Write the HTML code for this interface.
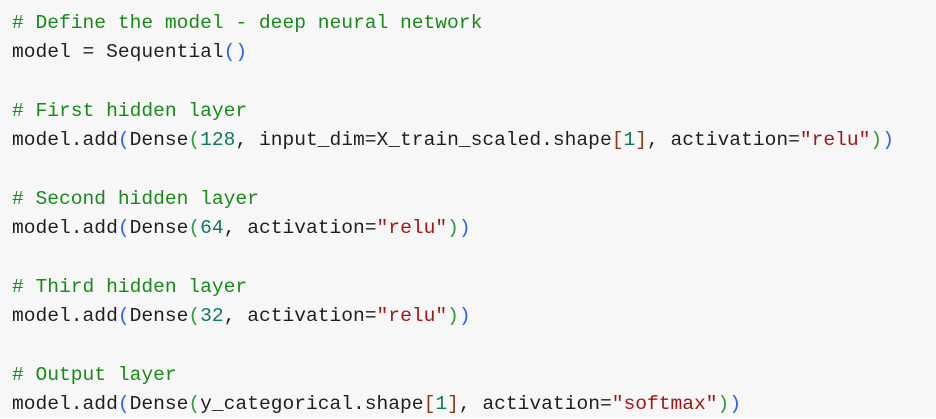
<!DOCTYPE html>
<html><head><meta charset="utf-8"><style>
html,body{margin:0;padding:0;background:#fff;}
.box{position:absolute;left:0;top:0;width:936px;height:417px;background:#f7f7f7;overflow:hidden;}
pre{margin:0;position:absolute;left:12px;top:9px;font-family:"Liberation Mono",monospace;font-size:19.6px;line-height:29.3px;color:#1f1f1f;}
.c{color:#178a17}.b{color:#2f5fe6}.g{color:#2e9a3a}.r{color:#8a3a14}.n{color:#0c7a55}.s{color:#a31515}
</style></head><body><div class="box"><pre><span class="c"># Define the model - deep neural network</span>
model = Sequential<span class="b">()</span>

<span class="c"># First hidden layer</span>
model.add<span class="b">(</span>Dense<span class="g">(</span><span class="n">128</span>, input_dim=X_train_scaled.shape<span class="r">[</span><span class="n">1</span><span class="r">]</span>, activation=<span class="s">"relu"</span><span class="g">)</span><span class="b">)</span>

<span class="c"># Second hidden layer</span>
model.add<span class="b">(</span>Dense<span class="g">(</span><span class="n">64</span>, activation=<span class="s">"relu"</span><span class="g">)</span><span class="b">)</span>

<span class="c"># Third hidden layer</span>
model.add<span class="b">(</span>Dense<span class="g">(</span><span class="n">32</span>, activation=<span class="s">"relu"</span><span class="g">)</span><span class="b">)</span>

<span class="c"># Output layer</span>
model.add<span class="b">(</span>Dense<span class="g">(</span>y_categorical.shape<span class="r">[</span><span class="n">1</span><span class="r">]</span>, activation=<span class="s">"softmax"</span><span class="g">)</span><span class="b">)</span></pre></div></body></html>
